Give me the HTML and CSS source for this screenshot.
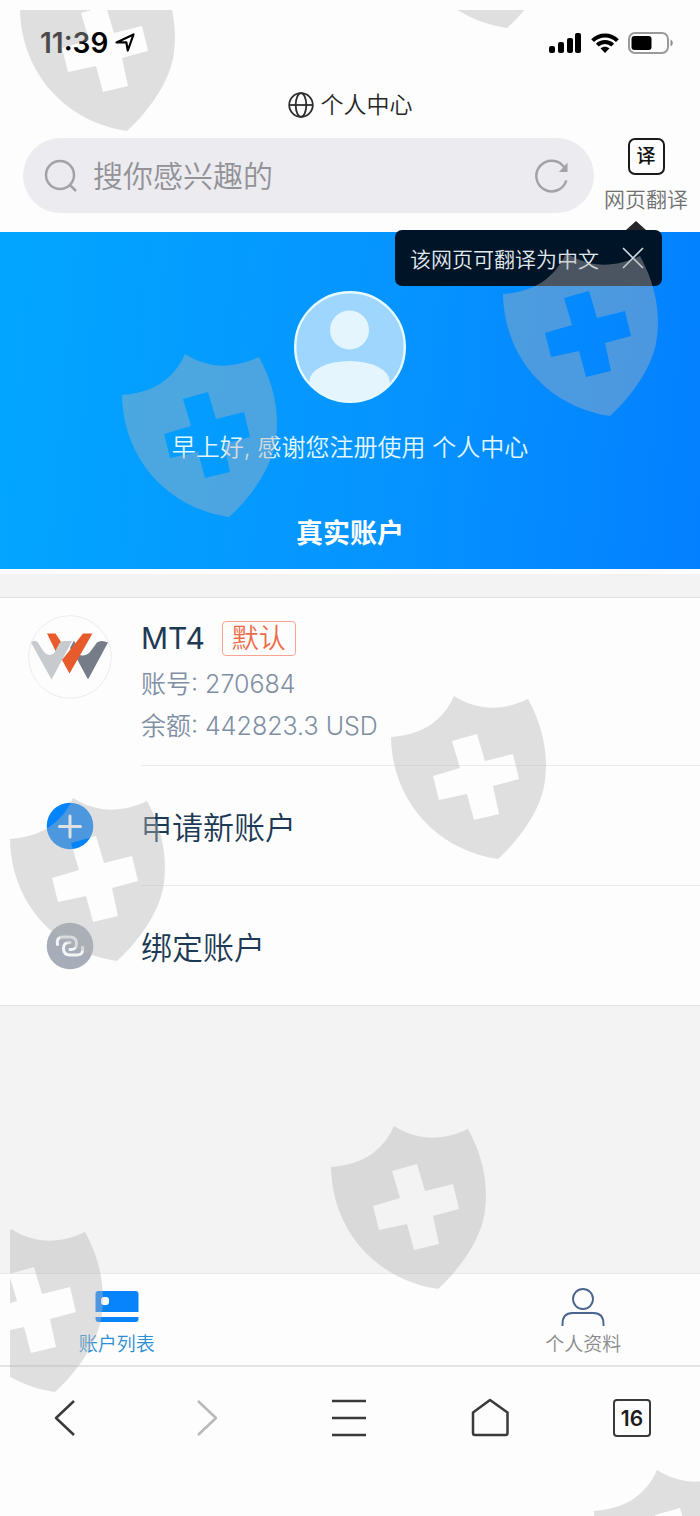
FILE: index.html
```html
<!DOCTYPE html>
<html lang="zh-CN">
<head>
<meta charset="utf-8">
<meta name="viewport" content="width=device-width, initial-scale=1">
<title>个人中心</title>
<link rel="stylesheet" href="styles.css">
</head>
<body>
<div class="page">
  <header class="browser-head">
    <div class="status">
      <div class="status-left">
        <span class="time">11:39</span>
        <svg width="20" height="20" viewBox="0 0 20 20" fill="none" stroke="#000" stroke-width="2.2" stroke-linejoin="round"><path d="M1.500 9.500 18.500 1.500 12.800 17.500 11.300 9.300Z"/></svg>
      </div>
      <div class="status-right">
        <svg width="33" height="20" viewBox="0 0 33 20"><rect x="0" y="13" width="6" height="7" rx="2"/><rect x="9" y="9" width="6" height="11" rx="2"/><rect x="18" y="5" width="6" height="15" rx="2"/><rect x="26" y="0" width="6" height="20" rx="2"/></svg>
        <svg width="28" height="20" viewBox="0 0 28 20"><g fill="none" stroke="#000" stroke-width="4"><path d="M1.6 7.6C8.5.7 19.5.7 26.4 7.6"/><path d="M6.3 12.2C10.5 8 17.5 8 21.7 12.2"/></g><path d="M9.5 15.3C12 13.2 16 13.2 18.5 15.3L14 20Z"/></svg>
        <svg width="46" height="22" viewBox="0 0 46 22"><rect x="1" y="1" width="39" height="20" rx="6" fill="none" stroke="#9a9a9a" stroke-width="2"/><rect x="3.5" y="4" width="20" height="14" rx="3"/><path d="M42.500 7.500c3 1.500 3 5.500 0 7Z" fill="#8c8c8c"/></svg>
      </div>
    </div>
    <div class="page-title">
      <svg width="26" height="26" viewBox="0 0 26 26" fill="none" stroke="#2e2e2e" stroke-width="1.8"><circle cx="13" cy="13" r="11.800"/><ellipse cx="13" cy="13" rx="5.300" ry="11.800"/><path d="M1 13h24"/></svg>
      <span>个人中心</span>
    </div>
    <div class="search-row">
      <form class="search">
        <svg width="34" height="34" viewBox="0 0 34 34" fill="none" stroke="#a2a2a8" stroke-width="2.500"><circle cx="16" cy="16" r="14"/><path d="m26 26 6 6"/></svg>
        <input class="search-input" type="text" aria-label="搜索" placeholder="搜你感兴趣的">
        <button class="plain" type="button" aria-label="刷新"><svg width="36" height="36" viewBox="0 0 36 36"><path d="M32.300 22.500A15.300 15.300 0 1 1 30 9" fill="none" stroke="#a2a2a8" stroke-width="2.500"/><path d="M33.500 4.500V14H25Z" fill="#a2a2a8"/></svg></button>
      </form>
      <div class="translate">
        <button class="plain translate-button" type="button"><span class="translate-glyph">译</span><span>网页翻译</span></button>
        <div class="tooltip" role="status">
          <span>该网页可翻译为中文</span>
          <button class="plain" type="button" aria-label="关闭"><svg width="22" height="22" viewBox="0 0 22 22" stroke="#d4dbe0" stroke-width="1.600"><path d="m1 1 20 20M21 1 1 21"/></svg></button>
        </div>
      </div>
    </div>
  </header>

  <section class="hero">
    <svg class="portrait" width="112" height="112" viewBox="0 0 112 112"><defs><clipPath id="round"><circle cx="56" cy="56" r="54.500"/></clipPath></defs><circle cx="56" cy="56" r="54.800" fill="#9fd6fe" stroke="#e6fbff" stroke-width="2.400"/><g fill="#e4f5fd" clip-path="url(#round)"><circle cx="55.500" cy="39" r="19.500"/><ellipse cx="55.500" cy="90" rx="40" ry="20"/><rect x="15.500" y="90" width="80" height="30"/></g></svg>
    <p class="greeting">早上好, 感谢您注册使用 个人中心</p>
    <h1 class="hero-title">真实账户</h1>
  </section>

  <main class="content">
    <ul class="accounts">
      <li class="row">
        <a class="row-link row-account" href="#account">
          <span class="row-icon"><svg width="84" height="84" viewBox="0 0 84 84"><circle cx="42" cy="42" r="41.300" fill="#fdfdfd" stroke="#ececef"/><path d="M19 18.500H27.500L35 30 29 39Z" fill="#ea5b2c"/><path d="M3 27.500Q5.500 24.500 9.500 27L16 37Q20 42 26 38.500L31.500 28Q33 26 36 26H44L33 47 23.500 64.500Z" fill="#c7cacf"/><path d="M46 25.500 50 34 46.500 38.500Q57 43 62 37L69 27.500Q73 24.500 80 27.500L60 64.500 49.500 45 42 33Z" fill="#777d88"/><path d="M55 18.500H64.500L41.500 58.500 34 45Z" fill="#e65a2c"/></svg></span>
          <span class="row-body">
            <span class="name-line"><span class="name">MT4</span><span class="badge">默认</span></span>
            <span class="detail">账号: 270684</span>
            <span class="detail">余额: 442823.3 USD</span>
          </span>
        </a>
      </li>
      <li class="row">
        <a class="row-link" href="#new">
          <span class="row-icon"><svg width="48" height="48" viewBox="0 0 48 48"><circle cx="24" cy="24" r="23.300" fill="#0484fa"/><path d="M24 14v21M13.500 24.500h21" stroke="#fff" stroke-width="3" stroke-linecap="round"/></svg></span>
          <span class="row-body action">申请新账户</span>
        </a>
      </li>
      <li class="row">
        <a class="row-link" href="#bind">
          <span class="row-icon"><svg width="48" height="48" viewBox="0 0 48 48" fill="none"><circle cx="24" cy="24" r="23.300" fill="#a6adb9"/><g stroke="#f4f5f7" stroke-width="3" stroke-linecap="round"><path d="M11.500 22.500Q10 15 17 15H23.500Q30.500 15 30.500 21.500T24 27.500"/><path d="M36.500 25.500Q38 33 31 33H24.500Q17.500 33 17.500 26.500T24 20.500"/></g></svg></span>
          <span class="row-body action">绑定账户</span>
        </a>
      </li>
    </ul>
  </main>

  <nav class="tabs" aria-label="账户">
    <a class="tab tab-active" href="#accounts">
      <svg width="44" height="40" viewBox="0 0 44 40"><path d="M.5 25V7q0-3 3-3h37q3 0 3 3v18ZM.5 30h43v2q0 3-3 3h-37q-3 0-3-3Z" fill="#0783fc"/><rect x="6" y="10" width="8" height="8" rx="3" fill="#fff"/></svg>
      <span>账户列表</span>
    </a>
    <a class="tab" href="#profile">
      <svg width="44" height="40" viewBox="0 0 44 40" fill="none" stroke="#4a6590" stroke-width="1.900"><circle cx="22" cy="12" r="10"/><path d="M1.500 39v-2q0-11 10-11h21q10 0 10 11v2"/></svg>
      <span>个人资料</span>
    </a>
  </nav>

  <nav class="toolbar" aria-label="浏览器">
    <button class="tool" type="button" aria-label="后退"><svg width="40" height="40" viewBox="0 0 40 40"><path d="M29 3 11 20l18 17"/></svg></button>
    <button class="tool tool-off" type="button" aria-label="前进"><svg width="40" height="40" viewBox="0 0 40 40"><path d="m11 3 18 17-18 17"/></svg></button>
    <button class="tool" type="button" aria-label="菜单"><svg width="40" height="40" viewBox="0 0 40 40"><path d="M3 3h34M3 20h34M3 37h34"/></svg></button>
    <button class="tool" type="button" aria-label="主页"><svg width="40" height="40" viewBox="0 0 40 40"><path d="M20 2 37.500 14.500V35q0 2-2 2H5q-2 0-2-2V14.500Z"/></svg></button>
    <button class="tool" type="button" aria-label="标签页 16"><span class="tab-count">16</span></button>
  </nav>

  <div class="shields" aria-hidden="true">
    <svg width="100%" height="100%">
      <defs>
        <path id="shield" fill-rule="evenodd" d="M0 41C29 39 51 27 63 0C87 15 111 15 137 3C153 32 157 60 154 84C151 113 128 144 107 163C46 154 1 105 0 41ZM61 45 86 38 94 65 122 58 128 83 102 90 108 118 83 124 76 98 48 104 42 80 69 72Z"/>
      </defs>
      <g fill="#b4b4b4" fill-opacity=".41">
        <use href="#shield" x="10" y="-42"/>
        <use href="#shield" x="390" y="-145"/>
        <use href="#shield" x="493" y="243"/>
        <use href="#shield" x="112" y="344"/>
        <use href="#shield" x="381" y="686"/>
        <use href="#shield" x="0" y="788"/>
        <use href="#shield" x="321" y="1116"/>
        <use href="#shield" x="-62" y="1219"/>
        <use href="#shield" x="584" y="1460"/>
      </g>
    </svg>
  </div>
</div>
</body>
</html>
```

FILE: styles.css
```css
* { box-sizing: border-box; }

body {
  margin: 0;
  background: #fdfdfd;
  color: #1d3a54;
  font-family: Inter, "Noto Sans CJK SC", sans-serif;
  font-weight: 350;
}

svg { display: block; flex: none; }

.page {
  position: relative;
  display: flex;
  flex-direction: column;
  min-height: 100vh;
}

.plain {
  padding: 0;
  border: 0;
  background: none;
  color: inherit;
  font: inherit;
}

/* Status bar, title and search */
.status {
  display: flex;
  justify-content: space-between;
  align-items: center;
  height: 86px;
  padding: 0 26px 0 40px;
}

.status-left { display: flex; align-items: center; gap: 7px; }
.status-right { display: flex; align-items: center; gap: 9px; }

.time {
  color: #000;
  font-size: 28px;
  font-weight: 600;
  line-height: 32px;
}

.page-title {
  display: flex;
  justify-content: center;
  align-items: center;
  gap: 7px;
  height: 38px;
  color: #262626;
  font-size: 23px;
  line-height: 34px;
}

.search-row {
  display: flex;
  align-items: flex-start;
  gap: 10px;
  padding: 14px 12px 0 23px;
  height: 108px;
}

.search {
  flex: 1;
  display: flex;
  align-items: center;
  gap: 15px;
  min-width: 0;
  height: 75px;
  margin: 0;
  padding: 0 24px 0 21px;
  border-radius: 38px;
  background: #ebebf0;
}

.search-input {
  flex: 1;
  min-width: 0;
  padding: 0;
  border: 0;
  outline: 0;
  background: none;
  color: #333;
  font: inherit;
  font-size: 30px;
}

.search-input::placeholder { color: #929297; opacity: 1; }

.translate { position: relative; }

.translate-button {
  display: flex;
  flex-direction: column;
  align-items: center;
  gap: 10px;
  color: #707070;
  font-size: 21px;
  line-height: 30px;
}

.translate-glyph {
  display: grid;
  place-items: center;
  width: 37px;
  height: 37px;
  border: 2px solid #1a1a1a;
  border-radius: 7px;
  color: #111;
  font-size: 19px;
  font-weight: 500;
}

.tooltip {
  position: absolute;
  top: 92px;
  right: 26px;
  z-index: 1;
  display: flex;
  align-items: center;
  gap: 23px;
  height: 56px;
  padding: 0 18px 0 15px;
  border-radius: 7px;
  background: #001428;
  color: #e2e9ee;
  font-size: 21px;
  white-space: nowrap;
}

.tooltip::before {
  content: "";
  position: absolute;
  right: 16px;
  bottom: 100%;
  border: 10px solid transparent;
  border-top: 0;
  border-bottom: 9px solid #26262a;
}

/* Greeting banner */
.hero {
  display: flex;
  flex-direction: column;
  align-items: center;
  height: 337px;
  padding-top: 59px;
  background: linear-gradient(95deg, #02a6ff 0%, #0694ff 55%, #0380ff 100%);
  color: #e2f7ff;
}

.greeting {
  margin: 27px 0 0;
  font-size: 24px;
  line-height: 36px;
}

.hero-title {
  margin: 48px 0 0;
  color: #fff;
  font-size: 27px;
  line-height: 40px;
  font-weight: 700;
}

/* Account list */
.content {
  flex: 1;
  padding-top: 23px;
  border-top: 5px solid #fdfdfd;
  background: #f3f3f4;
}

.accounts {
  margin: 0;
  padding: 0;
  border-top: 1px solid #e2e2e4;
  border-bottom: 1px solid #e2e2e4;
  background: #fdfdfd;
  list-style: none;
}

.row-link {
  display: flex;
  color: inherit;
  text-decoration: none;
}

.row-icon {
  display: flex;
  justify-content: center;
  align-items: center;
  width: 141px;
  padding-right: 1px;
}

.row-body {
  flex: 1;
  display: flex;
  flex-direction: column;
  justify-content: center;
  height: 120px;
  border-bottom: 1px solid #ebebee;
}

.row:last-child .row-body { height: 119px; border-bottom: 0; }

.row-account .row-icon { align-items: flex-start; padding-top: 17px; }
.row-account .row-body { height: 168px; justify-content: flex-start; padding-top: 15px; }

.name-line {
  display: flex;
  align-items: center;
  gap: 17px;
  height: 50px;
  font-size: 30px;
}

.name { font-weight: 400; }

.badge {
  padding: 0 9px;
  border: 1px solid #f7a592;
  border-radius: 4px;
  color: #ee6b49;
  font-size: 27px;
  line-height: 33px;
}

.detail {
  color: #808fa4;
  font-size: 25px;
  line-height: 42px;
}

.action { font-size: 31px; }

/* Page tabs */
.tabs {
  display: flex;
  justify-content: space-between;
  height: 94px;
  border-top: 1px solid #e9e9eb;
  border-bottom: 2px solid #e4e4e6;
  background: #fdfdfd;
}

.tab {
  display: flex;
  flex-direction: column;
  align-items: center;
  gap: 3px;
  width: 33.33%;
  padding-top: 13px;
  color: #8a8a8c;
  font-size: 19px;
  line-height: 30px;
  text-decoration: none;
}

.tab-active { color: #2c8fd6; }

/* Browser toolbar */
.toolbar {
  display: flex;
  justify-content: space-between;
  align-items: flex-start;
  height: 149px;
  padding: 31px 48px 0 45px;
}

.tool {
  display: grid;
  place-items: center;
  width: 40px;
  height: 40px;
  padding: 0;
  border: 0;
  background: none;
  color: #3a3a3a;
  font: inherit;
}

.tool svg { fill: none; stroke: currentColor; stroke-width: 2.5; stroke-linejoin: round; }
.tool-off { color: #b9b9b9; }

.tab-count {
  display: grid;
  place-items: center;
  width: 38px;
  height: 38px;
  border: 2px solid #3a3a3a;
  border-radius: 4px;
  color: #1c1c1c;
  font-size: 21px;
  font-weight: 600;
}

/* Shield pattern laid over the page */
.shields {
  position: absolute;
  inset: 10px 0 0 10px;
  z-index: 2;
  overflow: hidden;
  pointer-events: none;
}
```
